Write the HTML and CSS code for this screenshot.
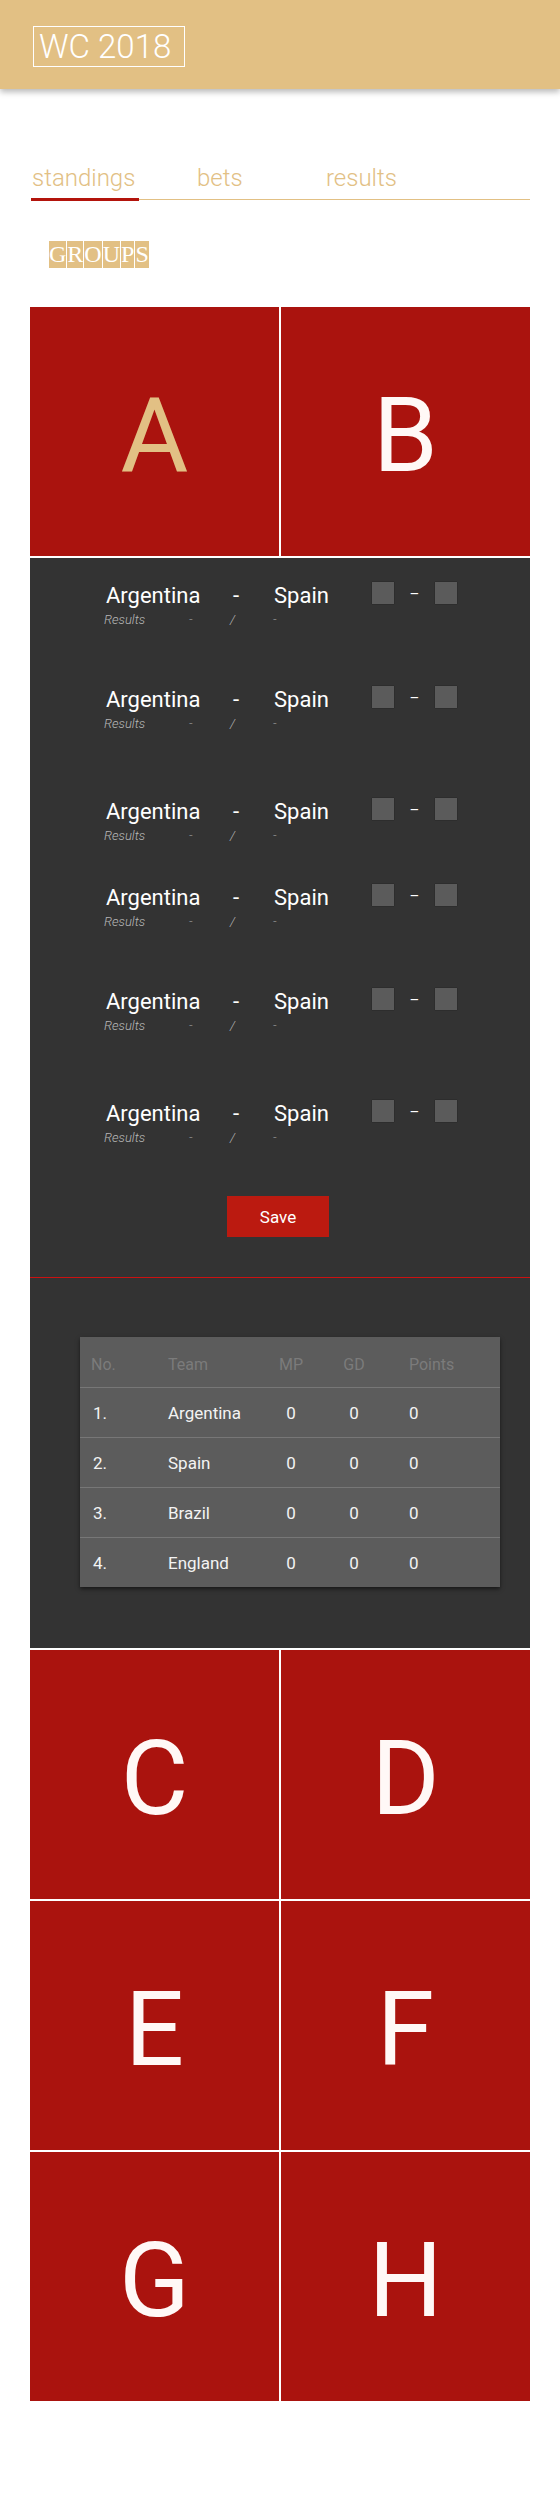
FILE: index.html
```html
<!DOCTYPE html>
<html lang="en">
<head>
<meta charset="utf-8">
<title>WC 2018</title>
<link rel="stylesheet" href="styles.css">
</head>
<body>
<header class="topbar">
  <div class="brand">WC 2018</div>
</header>

<nav class="tabs">
  <a class="tab tab-standings active">standings</a>
  <a class="tab tab-bets">bets</a>
  <a class="tab tab-results">results</a>
</nav>

<h2 class="groups-title"><span>G</span><span>R</span><span>O</span><span>U</span><span>P</span><span>S</span></h2>

<section class="groups">
  <div class="tiles">
    <div class="tile selected">A</div>
    <div class="tile">B</div>
  </div>

  <div class="panel">
    <div class="match">
      <div class="match-line"><span class="team1">Argentina</span><span class="vs">-</span><span class="team2">Spain</span><span class="score"><span class="box"></span><span class="score-dash">–</span><span class="box"></span></span></div>
      <div class="result-line"><span class="r-label">Results</span><span class="r-dash">-</span><span class="r-slash">/</span><span class="r-dash2">-</span></div>
    </div>
    <div class="match gap-a">
      <div class="match-line"><span class="team1">Argentina</span><span class="vs">-</span><span class="team2">Spain</span><span class="score"><span class="box"></span><span class="score-dash">–</span><span class="box"></span></span></div>
      <div class="result-line"><span class="r-label">Results</span><span class="r-dash">-</span><span class="r-slash">/</span><span class="r-dash2">-</span></div>
    </div>
    <div class="match gap-b">
      <div class="match-line"><span class="team1">Argentina</span><span class="vs">-</span><span class="team2">Spain</span><span class="score"><span class="box"></span><span class="score-dash">–</span><span class="box"></span></span></div>
      <div class="result-line"><span class="r-label">Results</span><span class="r-dash">-</span><span class="r-slash">/</span><span class="r-dash2">-</span></div>
    </div>
    <div class="match gap-c">
      <div class="match-line"><span class="team1">Argentina</span><span class="vs">-</span><span class="team2">Spain</span><span class="score"><span class="box"></span><span class="score-dash">–</span><span class="box"></span></span></div>
      <div class="result-line"><span class="r-label">Results</span><span class="r-dash">-</span><span class="r-slash">/</span><span class="r-dash2">-</span></div>
    </div>
    <div class="match gap-a">
      <div class="match-line"><span class="team1">Argentina</span><span class="vs">-</span><span class="team2">Spain</span><span class="score"><span class="box"></span><span class="score-dash">–</span><span class="box"></span></span></div>
      <div class="result-line"><span class="r-label">Results</span><span class="r-dash">-</span><span class="r-slash">/</span><span class="r-dash2">-</span></div>
    </div>
    <div class="match gap-b">
      <div class="match-line"><span class="team1">Argentina</span><span class="vs">-</span><span class="team2">Spain</span><span class="score"><span class="box"></span><span class="score-dash">–</span><span class="box"></span></span></div>
      <div class="result-line"><span class="r-label">Results</span><span class="r-dash">-</span><span class="r-slash">/</span><span class="r-dash2">-</span></div>
    </div>

    <button class="save">Save</button>

    <hr class="divider">

    <table class="standings">
      <thead>
        <tr><th class="c-no">No.</th><th class="c-team">Team</th><th class="c-mp">MP</th><th class="c-gd">GD</th><th class="c-pts">Points</th></tr>
      </thead>
      <tbody>
        <tr><td class="c-no">1.</td><td class="c-team">Argentina</td><td class="c-mp">0</td><td class="c-gd">0</td><td class="c-pts">0</td></tr>
        <tr><td class="c-no">2.</td><td class="c-team">Spain</td><td class="c-mp">0</td><td class="c-gd">0</td><td class="c-pts">0</td></tr>
        <tr><td class="c-no">3.</td><td class="c-team">Brazil</td><td class="c-mp">0</td><td class="c-gd">0</td><td class="c-pts">0</td></tr>
        <tr><td class="c-no">4.</td><td class="c-team">England</td><td class="c-mp">0</td><td class="c-gd">0</td><td class="c-pts">0</td></tr>
      </tbody>
    </table>
  </div>

  <div class="tiles">
    <div class="tile">C</div>
    <div class="tile">D</div>
    <div class="tile">E</div>
    <div class="tile">F</div>
    <div class="tile">G</div>
    <div class="tile">H</div>
  </div>
</section>
</body>
</html>
```

FILE: styles.css
```css
html, body {
  margin: 0;
  padding: 0;
  background: #ffffff;
  font-family: Roboto, "Liberation Sans", Arial, sans-serif;
}

.topbar {
  height: 89px;
  box-sizing: border-box;
  padding: 26px 0 0 33px;
  background: #e2c084;
  box-shadow: 0 3px 6px rgba(0, 0, 0, 0.28);
}

.brand {
  width: 152px;
  height: 41px;
  box-sizing: border-box;
  border: 1px solid #ffffff;
  padding-left: 5px;
  color: #ffffff;
  font-size: 33px;
  font-weight: 300;
  line-height: 39px;
  white-space: nowrap;
}

.tabs {
  display: flex;
  align-items: flex-start;
  width: 499px;
  margin: 75px 0 0 31px;
  border-bottom: 1px solid #e2c084;
}

.tab {
  display: block;
  box-sizing: border-box;
  padding: 0 0 6px 1px;
  color: #e2c084;
  font-size: 24px;
  font-weight: 300;
  line-height: 28px;
  cursor: pointer;
}

.tab-standings {
  width: 108px;
  margin-right: 57px;
}

.tab-bets {
  width: 129px;
}

.tab.active {
  border-bottom: 3px solid #b3140c;
  margin-bottom: -2px;
}

.groups-title {
  display: flex;
  gap: 1px;
  margin: 41px 0 0 49px;
  padding: 0;
  font-family: "Liberation Serif", "Times New Roman", serif;
  font-size: 24px;
  font-weight: 400;
  line-height: 27px;
}

.groups-title span {
  display: block;
  height: 27px;
  background: #e2c084;
  color: #ffffff;
}

.groups {
  width: 500px;
  margin: 39px 0 0 30px;
}

.tiles {
  display: grid;
  grid-template-columns: 1fr 1fr;
  grid-auto-rows: 249px;
  gap: 2px;
}

.tile {
  display: flex;
  align-items: center;
  justify-content: center;
  box-sizing: border-box;
  padding-top: 8px;
  background: #aa130e;
  color: #fff8f6;
  font-size: 104px;
  font-weight: 400;
}

.tile.selected {
  color: #e2c084;
}

.panel {
  margin: 2px 0;
  padding: 24px 0 61px;
  background: #333333;
}

.match {
  padding-left: 76px;
}

.gap-a { margin-top: 56px; }
.gap-b { margin-top: 64px; }
.gap-c { margin-top: 38px; }

.match-line {
  display: flex;
  height: 28px;
  color: #ffffff;
  font-size: 22px;
  line-height: 28px;
}

.team1 { width: 127px; }
.vs { width: 41px; }
.team2 { width: 98px; }

.score {
  display: flex;
  align-items: flex-start;
}

.box {
  width: 22px;
  height: 22px;
  background: #5b5b5b;
  box-shadow: 0 0 1px rgba(0, 0, 0, 0.6);
}

.score-dash {
  width: 41px;
  text-align: center;
  font-size: 15px;
  line-height: 24px;
}

.result-line {
  display: flex;
  height: 20px;
  margin-left: -2px;
  color: #b8b8b8;
  font-size: 13px;
  font-style: italic;
  font-weight: 300;
  line-height: 20px;
}

.r-label { width: 85px; }
.r-dash { width: 41px; }
.r-slash { width: 43px; }

.save {
  display: block;
  width: 102px;
  height: 41px;
  margin: 48px 0 0 197px;
  padding: 0;
  border: 0;
  background: #bb1a10;
  color: #ffffff;
  font-family: Roboto, "Liberation Sans", Arial, sans-serif;
  font-size: 17px;
  cursor: pointer;
}

.divider {
  height: 0;
  margin: 40px 0 0;
  border: 0;
  border-top: 1px solid #cc1111;
}

.standings {
  width: 420px;
  margin: 59px 0 0 50px;
  border-collapse: separate;
  border-spacing: 0;
  table-layout: fixed;
  background: #5c5c5c;
  box-shadow: 0 2px 4px rgba(0, 0, 0, 0.55);
}

.standings th {
  height: 46px;
  padding: 4px 0 0;
  color: #7b7b7b;
  font-size: 16px;
  font-weight: 400;
  text-align: left;
}

.standings td {
  height: 49px;
  padding: 0;
  border-top: 1px solid #777777;
  color: #f3f3f3;
  font-size: 17px;
  text-align: left;
}

.standings .c-no { width: 88px; }
.standings th.c-no { padding-left: 11px; width: 77px; }
.standings td.c-no { padding-left: 13px; width: 75px; }
.standings .c-team { width: 100px; }
.standings .c-mp { width: 46px; text-align: center; }
.standings .c-gd { width: 80px; text-align: center; }
.standings .c-pts { padding-left: 15px; width: 91px; }
```
